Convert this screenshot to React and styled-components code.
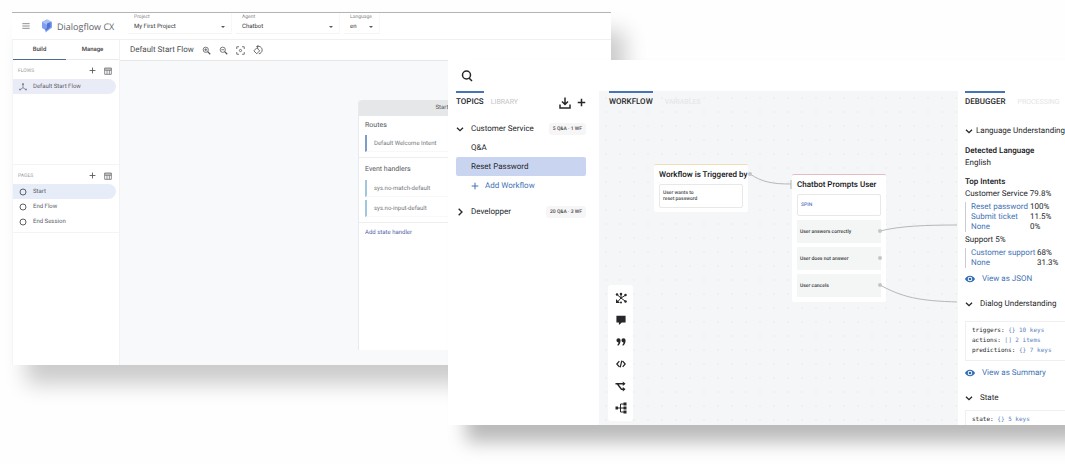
import React from 'react';
import styled, { createGlobalStyle } from 'styled-components';

const GlobalStyle = createGlobalStyle`
    * {
        box-sizing: border-box;
    }

    body {
        margin: 0;
        background: #fefefe;
        font-family: Roboto, "Liberation Sans", sans-serif;
        text-rendering: geometricPrecision;
    }

    button, select {
        border: none;
        background: none;
        padding: 0;
        margin: 0;
        font: inherit;
        color: inherit;
        text-align: left;
        text-rendering: inherit;
    }

    a {
        color: inherit;
        text-decoration: none;
    }

    ul {
        list-style: none;
        margin: 0;
        padding: 0;
    }

    h2, h3, p {
        margin: 0;
        font-size: inherit;
        font-weight: inherit;
    }

    svg {
        display: block;
        flex-shrink: 0;
    }
`;

const Stage = styled.main`
    display: grid;
    grid-template-columns: 436fr 163fr 454fr;
    grid-template-rows: 48px 305px auto;
    padding: 12px 0 39px 12px;
    min-height: 100vh;
    overflow: hidden;
`;

/* ---------- Dialogflow window ---------- */

const FlowWindow = styled.section`
    grid-column: 1 / 3;
    grid-row: 1 / 3;
    display: flex;
    flex-direction: column;
    min-width: 0;
    background: white;
    border-top: 1px solid #b4b4b4;
    box-shadow: 14px 19px 20px rgba(0, 0, 0, 0.2);
    color: #56595d;
    font-size: 6px;
`;

const FlowHeader = styled.header`
    display: flex;
    align-items: center;
    height: 27px;
    padding-left: 10px;
    border-bottom: 1px solid #f0f0f1;
`;

const Brand = styled.div`
    display: flex;
    align-items: center;
    gap: 4px;
    width: 87px;
    margin-left: 11px;
    font-family: "Open Sans", Roboto, sans-serif;
    font-size: 9px;
    white-space: nowrap;
    color: #5f6368;
`;

const Field = styled.div`
    display: flex;
    flex-direction: column;
    align-self: flex-start;
    width: ${props => props.$width}px;
    height: 21px;
    margin-right: 4px;
    padding: 1px 6px 0 6px;
    border-bottom: 1px solid #f4f4f5;
    border-right: 1px solid #f8f8f8;

    label {
        font-size: 5px;
        line-height: 6px;
        color: #85888c;
    }
`;

const SelectWrap = styled.div`
    display: flex;
    align-items: center;
    flex: 1;

    select {
        flex: 1;
        min-width: 0;
        appearance: none;
        color: #33363a;
    }
`;

const FlowBody = styled.div`
    display: grid;
    grid-template-columns: 108px 1fr;
    flex: 1;
`;

const Sidebar = styled.aside`
    display: grid;
    grid-template-rows: 20px 105px auto;
    align-content: start;
    border-left: 1px solid #f5f5f5;
    border-right: 1px solid #f1f2f3;
`;

const FlowTabs = styled.div`
    display: grid;
    grid-template-columns: 1fr 1fr;
`;

const FlowTab = styled.button`
    text-align: center;
    color: #3d4043;
    font-weight: 500;
    border-bottom: 1px solid ${props => props.$active ? '#4f6d92' : '#e9eaeb'};
`;

const ListSection = styled.section`
    padding-bottom: 3px;
    border-bottom: 1px solid #f4f4f5;
`;

const ListHead = styled.div`
    display: flex;
    align-items: center;
    gap: 8px;
    height: 19px;
    padding: 2px 7px 0 5px;
    color: #55585c;

    h2 {
        flex: 1;
        color: #96989b;
        font-size: 5px;
    }
`;

const ListItem = styled.button`
    display: flex;
    align-items: center;
    gap: 6px;
    width: 103px;
    height: 15px;
    padding-left: 6px;
    border-radius: 0 8px 8px 0;
    background: ${props => props.$active ? props.$tint : 'none'};
    color: #5c6066;
`;

const FlowMain = styled.div`
    display: flex;
    flex-direction: column;
    min-width: 0;
`;

const FlowToolbar = styled.div`
    display: flex;
    align-items: center;
    gap: 8px;
    height: 21px;
    padding-left: 10px;
    border-bottom: 1px solid #e6e7e8;
    color: #4c4f53;

    h2 {
        font-size: 8px;
        line-height: 10px;
        white-space: nowrap;
    }
`;

const FlowCanvas = styled.div`
    flex: 1;
    padding: 39px 86px 15px 238px;
    background: #f8f9fb;
`;

const StartCard = styled.article`
    height: 100%;
    background: white;
    border-left: 1px solid #e9eaec;
    border-radius: 3px 3px 0 0;

    h2 {
        height: 16px;
        line-height: 16px;
        text-align: center;
        background: #e6e7e8;
        border-radius: 3px 3px 0 0;
    }
`;

const HandlerGroup = styled.div`
    padding: 0 6px 5px 6px;
    border-bottom: 1px solid #eeeeef;

    h3 {
        height: ${props => props.$head}px;
        line-height: ${props => props.$head}px;
        font-size: 7px;
    }

    ul {
        display: grid;
        gap: 3px;
    }

    li {
        height: 17px;
        line-height: 18px;
        padding-left: 7px;
        border-left: 2px solid ${props => props.$bar};
        border-bottom: 1px solid #f8f8f8;
        color: #74777b;
    }
`;

const AddHandler = styled.button`
    height: 19px;
    padding-left: 6px;
    color: #5363a8;
`;

/* ---------- Workflow window ---------- */

const BotWindow = styled.section`
    grid-column: 2 / 4;
    grid-row: 2 / 4;
    display: flex;
    flex-direction: column;
    min-width: 0;
    background: white;
    box-shadow: 18px 17px 17px rgba(0, 0, 0, 0.27);
    color: #25272a;
    font-size: 8px;
`;

const SearchBar = styled.div`
    display: flex;
    align-items: center;
    height: 31px;
    padding-left: 13px;
`;

const BotBody = styled.div`
    display: grid;
    grid-template-columns: 151px 1fr 108px;
    flex: 1;
`;

const Tabs = styled.div`
    display: flex;
    gap: ${props => props.$gap}px;
`;

const Tab = styled.button`
    height: 19px;
    font-size: ${props => props.$active ? 8 : 7}px;
    font-weight: ${props => props.$active ? 500 : 400};
    color: ${props => props.$active ? '#25272a' : props.$faint ? '#e4e5e6' : '#c3c5c7'};
    border-top: 2px solid ${props => props.$active ? '#4675b5' : 'transparent'};
`;

const Topics = styled.aside`
    padding: 0 13px 0 8px;
`;

const TopicsHead = styled.div`
    display: flex;
    justify-content: space-between;
    margin-bottom: 9px;
`;

const TopicActions = styled.div`
    display: flex;
    align-items: center;
    gap: 6px;
    padding-top: 4px;
`;

const Topic = styled.button`
    display: flex;
    align-items: center;
    width: 100%;
    height: 19px;
    margin-top: ${props => props.$spaced ? 7 : 0}px;
    padding-left: ${props => props.$nested ? 15 : 0}px;
    border-radius: 2px;
    background: ${props => props.$active ? '#c9d5f0' : 'none'};
    color: ${props => props.$link ? '#3f73b5' : 'inherit'};

    svg {
        margin-right: ${props => props.$link ? 6 : 7}px;
    }
`;

const Count = styled.span`
    margin-left: auto;
    padding: 0 4px;
    line-height: 12px;
    border-radius: 3px;
    background: #f6f6f7;
    color: #4a4c4f;
    font-size: 5px;
    font-weight: 500;
    white-space: nowrap;
`;

const Workflow = styled.div`
    position: relative;
    padding-left: 10px;
    overflow: hidden;
    background: radial-gradient(circle, #eef0f1 1px, transparent 1px) 0 0 / 14px 14px #f5f6f7;
`;

const Wires = styled.svg`
    position: absolute;
    left: 0;
    top: 0;
    width: 360px;
    height: 334px;
    fill: none;
    stroke: #b5b7b9;
`;

const Node = styled.article`
    position: absolute;
    left: ${props => props.$x}px;
    top: ${props => props.$y}px;
    width: ${props => props.$width}px;
    padding: 0 5px ${props => props.$foot}px 5px;
    background: white;
    border-top: 1px solid ${props => props.$accent};
    border-radius: 2px;
    font-size: 5px;

    h3 {
        height: 19px;
        line-height: 19px;
        font-size: 8px;
        font-weight: 500;
        white-space: nowrap;
        color: #141517;
    }
`;

const Message = styled.p`
    display: flex;
    align-items: center;
    height: ${props => props.$height}px;
    padding-left: 3px;
    border: 1px solid #e8e8e9;
    border-radius: 2px;
    line-height: 6px;
    font-weight: 500;
    color: ${props => props.$link ? '#5b76c4' : '#4b4d50'};
`;

const Outcome = styled.button`
    display: flex;
    align-items: center;
    width: 100%;
    height: 23px;
    margin-top: 4px;
    padding-left: 3px;
    background: #f4f5f5;
    font-weight: 500;
    color: #3b3d40;
`;

const ToolStrip = styled.div`
    position: absolute;
    left: 9px;
    bottom: 4px;
    display: grid;
    width: 25px;
    padding: 2px 0;
    justify-items: center;
    background: white;
    border-radius: 3px;

    button {
        display: grid;
        place-items: center;
        width: 22px;
        height: 22px;
    }
`;

const Debugger = styled.aside`
    min-width: 0;
    padding-left: 7px;
    border-left: 1px solid #f6f6f7;
    overflow: hidden;
    white-space: nowrap;
    line-height: 12px;
`;

const Heading = styled.button`
    display: flex;
    align-items: center;
    gap: ${props => props.$gap || 7}px;
    height: 12px;
    margin: ${props => props.$top || 13}px 0 0 0;
    line-height: 12px;
`;

const Strong = styled.h3`
    margin-top: ${props => props.$top}px;
    font-weight: 500;
    color: #141517;
`;

const Intents = styled.ul`
    margin: 2px 0;
    padding-left: 5px;
    border-left: 1px solid #c9cbd6;
    line-height: 10px;

    li {
        display: grid;
        grid-template-columns: ${props => props.$labelWidth}px auto;
    }

    a {
        color: #3f73b5;
    }
`;

const ViewAs = styled.button`
    display: flex;
    align-items: center;
    gap: 7px;
    height: 12px;
    margin-top: ${props => props.$top}px;
    color: #3f73b5;
`;

const Code = styled.pre`
    margin: ${props => props.$top}px 0 0 0;
    padding: 4px 0 ${props => props.$open ? 0 : 4}px 6px;
    border: 1px solid #efeff0;
    border-right: none;
    border-bottom-width: ${props => props.$open ? 0 : 1}px;
    font-family: "DejaVu Sans Mono", "Liberation Mono", monospace;
    font-size: 6px;
    line-height: 10px;

    span {
        color: #5b7fc0;
    }
`;

/* ---------- Icons ---------- */

const Line = ({ size = 8, width = 2, box = 24, children }) => (
    <svg width={size} height={size} viewBox={`0 0 ${box} ${box}`} fill="none" stroke="currentColor" strokeWidth={width}>
        {children}
    </svg>
);

const PlusIcon = ({ size, width }) => <Line size={size} width={width}><path d="M12 2v20M2 12h20" /></Line>;

const TableIcon = () => (
    <Line size={8} width={2}><path d="M2 3h20v19H2zM2 6h20M2 10h20M9 10v12M16 10v12" /></Line>
);

const ChevronDown = () => <Line size={8} width={4}><path d="M3 8l9 9 9-9" /></Line>;

const ChevronRight = () => <Line size={8} width={4}><path d="M8 2l10 10L8 22" /></Line>;

const Caret = () => <svg width="4" height="2" viewBox="0 0 4 2"><path d="M0 0h4L2 2z" fill="#55585c" /></svg>;

const Ring = () => <Line size={8} width={3}><circle cx="12" cy="12" r="9" /></Line>;

const EyeIcon = () => (
    <svg width="10" height="8" viewBox="0 0 24 18">
        <path d="M12 1C6.500 1 2 4.500 0 9c2 4.500 6.500 8 12 8s10-3.500 12-8c-2-4.500-6.500-8-12-8z" fill="#2f6cb3" />
        <circle cx="12" cy="9" r="5.500" fill="white" />
        <circle cx="12" cy="9" r="3.200" fill="#2f6cb3" />
    </svg>
);

const LogoIcon = () => (
    <svg width="12" height="14" viewBox="0 0 24 28">
        <path d="M12 1l10 5v11L9 27v-5l-7-4V6z" fill="#7c9ff0" />
        <path d="M12 1l10 5-10 6L2 6z" fill="#a9c0f7" />
        <path d="M12 9l7-3v10L9 24v-4l3-2z" fill="#5272d2" />
    </svg>
);

const FlowIcon = () => (
    <Line size={8} width={2}>
        <path d="M12 5v9M12 14l-7 5M12 14l7 5" />
        <path d="M12 1v5M3 17v5M21 17v5" strokeWidth="4" />
    </Line>
);

const ZoomIcon = ({ plus }) => (
    <Line size={9} width={2}>
        <circle cx="10" cy="10" r="7" />
        <path d="M15 15l7 7" strokeWidth="3" />
        <path d={plus ? 'M6 10h8M10 6v8' : 'M6 10h8'} />
    </Line>
);

const CenterIcon = () => (
    <Line size={9} width={2}>
        <path d="M2 8V2h6M16 2h6v6M22 16v6h-6M8 22H2v-6" />
        <circle cx="12" cy="12" r="3" />
    </Line>
);

const RotateIcon = () => (
    <Line size={10} width={2}>
        <path d="M9 7l7 7-7 7-7-7z" />
        <path d="M9 4c8-3 13 3 13 8s-4 9-8 9M13 0L9 4l4 4" />
    </Line>
);

const SearchIcon = () => (
    <Line size={12} width={3}><circle cx="11" cy="10" r="8" /><path d="M16 16l6 6" /></Line>
);

const DownloadIcon = () => (
    <Line size={12} width={3}><path d="M12 1v14M6 9l6 6 6-6M2 15v7h20v-7" /></Line>
);

const tools = [
    {
        name: 'Hub',
        icon: (
            <Line size={12} width={2}>
                <path d="M12 12V4M12 12l8-5M12 12l8 6M12 12l-8 9M12 12L5 6" />
                <g fill="currentColor" stroke="none">
                    <circle cx="12" cy="4" r="2.500" />
                    <circle cx="21" cy="6" r="2.500" />
                    <circle cx="21" cy="19" r="2.500" />
                    <circle cx="4" cy="5" r="2.500" />
                    <path d="M2 22v-8l8 8z" />
                    <circle cx="12" cy="21" r="2" />
                </g>
            </Line>
        ),
    },
    {
        name: 'Message',
        icon: <svg width="10" height="10" viewBox="0 0 24 24"><path d="M1 2h22v16H14l-7 6v-6H1z" fill="currentColor" /></svg>,
    },
    {
        name: 'Quote',
        icon: (
            <svg width="10" height="10" viewBox="0 0 24 24" fill="currentColor">
                <path d="M1 8a5 5 0 1 1 10 0c0 6-2 10-6 13l-2-2c2-2 3-4 3-6a5 5 0 0 1-5-5zM13 8a5 5 0 1 1 10 0c0 6-2 10-6 13l-2-2c2-2 3-4 3-6a5 5 0 0 1-5-5z" />
            </svg>
        ),
    },
    {
        name: 'Code',
        icon: <Line size={10} width={3}><path d="M8 5l-6 7 6 7M16 5l6 7-6 7M14 4l-4 16" /></Line>,
    },
    {
        name: 'Split',
        icon: (
            <Line size={11} width={3}>
                <path d="M1 6h19M5 6l9 12h6" />
                <path d="M17 1l6 5-6 5zM17 13l6 5-6 5z" fill="currentColor" stroke="none" />
            </Line>
        ),
    },
    {
        name: 'Tree',
        icon: (
            <Line size={12} width={2}>
                <path d="M3 12h18M19 4h-8v16h8" />
                <path d="M1 9h5v6H1zM17 1h6v6h-6zM17 9h6v6h-6zM17 17h6v6h-6z" fill="currentColor" stroke="none" />
            </Line>
        ),
    },
];

/* ---------- Parts ---------- */

function HeaderField({ id, label, value, width }) {
    return (
        <Field $width={width}>
            <label htmlFor={id}>{label}</label>
            <SelectWrap>
                <select id={id} defaultValue={value}>
                    <option>{value}</option>
                </select>
                <Caret />
            </SelectWrap>
        </Field>
    );
}

function SidebarHead({ title }) {
    return (
        <ListHead>
            <h2>{title}</h2>
            <button aria-label="Add"><PlusIcon size={7} width={3} /></button>
            <button aria-label="Show as table"><TableIcon /></button>
        </ListHead>
    );
}

function DialogflowWindow() {
    return (
        <FlowWindow>
            <FlowHeader>
                <button aria-label="Menu"><Line size={8} width={2}><path d="M1 5h22M1 12h22M1 19h22" /></Line></button>
                <Brand><LogoIcon />Dialogflow CX</Brand>
                <HeaderField id="project" label="Project" value="My First Project" width={104} />
                <HeaderField id="agent" label="Agent" value="Chatbot" width={104} />
                <HeaderField id="language" label="Language" value="en" width={36} />
            </FlowHeader>
            <FlowBody>
                <Sidebar>
                    <FlowTabs>
                        <FlowTab $active>Build</FlowTab>
                        <FlowTab>Manage</FlowTab>
                    </FlowTabs>
                    <ListSection>
                        <SidebarHead title="FLOWS" />
                        <ListItem $active $tint="#e9ebf7"><FlowIcon />Default Start Flow</ListItem>
                    </ListSection>
                    <ListSection>
                        <SidebarHead title="PAGES" />
                        <ListItem $active $tint="#e7edf8"><Ring />Start</ListItem>
                        <ListItem><Ring />End Flow</ListItem>
                        <ListItem><Ring />End Session</ListItem>
                    </ListSection>
                </Sidebar>
                <FlowMain>
                    <FlowToolbar>
                        <h2>Default Start Flow</h2>
                        <button aria-label="Zoom in"><ZoomIcon plus /></button>
                        <button aria-label="Zoom out"><ZoomIcon /></button>
                        <button aria-label="Center"><CenterIcon /></button>
                        <button aria-label="Reset layout"><RotateIcon /></button>
                    </FlowToolbar>
                    <FlowCanvas>
                        <StartCard>
                            <h2>Start</h2>
                            <HandlerGroup $head={19} $bar="#7d9bcb">
                                <h3>Routes</h3>
                                <ul><li>Default Welcome Intent</li></ul>
                            </HandlerGroup>
                            <HandlerGroup $head={22} $bar="#9fc7de">
                                <h3>Event handlers</h3>
                                <ul>
                                    <li>sys.no-match-default</li>
                                    <li>sys.no-input-default</li>
                                </ul>
                            </HandlerGroup>
                            <AddHandler>Add state handler</AddHandler>
                        </StartCard>
                    </FlowCanvas>
                </FlowMain>
            </FlowBody>
        </FlowWindow>
    );
}

function TopicsPanel() {
    return (
        <Topics>
            <TopicsHead>
                <Tabs $gap={7}>
                    <Tab $active>TOPICS</Tab>
                    <Tab>LIBRARY</Tab>
                </Tabs>
                <TopicActions>
                    <button aria-label="Import"><DownloadIcon /></button>
                    <button aria-label="Add topic"><PlusIcon size={9} width={4} /></button>
                </TopicActions>
            </TopicsHead>
            <Topic><ChevronDown />Customer Service<Count>5 Q&amp;A · 1 WF</Count></Topic>
            <Topic $nested>Q&amp;A</Topic>
            <Topic $nested $active>Reset Password</Topic>
            <Topic $nested $link><PlusIcon size={8} width={3} />Add Workflow</Topic>
            <Topic $spaced><ChevronRight />Developper<Count>20 Q&amp;A · 3 WF</Count></Topic>
        </Topics>
    );
}

function WorkflowPanel() {
    return (
        <Workflow>
            <Tabs $gap={12}>
                <Tab $active>WORKFLOW</Tab>
                <Tab $faint>VARIABLES</Tab>
            </Tabs>
            <Node $x={55} $y={73} $width={94} $foot={4} $accent="#f0ddb4">
                <h3>Workflow is Triggered by</h3>
                <Message $height={24}>User wants to<br />reset password</Message>
            </Node>
            <Node $x={193} $y={83} $width={94} $foot={5} $accent="#e3bcc3">
                <h3>Chatbot Prompts User</h3>
                <Message $height={22} $link>SPIN</Message>
                <Outcome>User answers correctly</Outcome>
                <Outcome>User does not answer</Outcome>
                <Outcome>User cancels</Outcome>
            </Node>
            <Wires viewBox="0 0 360 334">
                <path d="M151 83c12 8 22 10 41 10M192 89v9" />
                <path d="M281 140c20-5 45-6 79-6M281 194c22 12 38 16 79 17" />
                <g fill="#c4c6c8" stroke="none">
                    <circle cx="151" cy="83" r="2" />
                    <circle cx="281" cy="140" r="2" />
                    <circle cx="281" cy="167" r="2" />
                    <circle cx="281" cy="194" r="2" />
                </g>
            </Wires>
            <ToolStrip>
                {tools.map(tool => (
                    <button key={tool.name} aria-label={tool.name}>{tool.icon}</button>
                ))}
            </ToolStrip>
        </Workflow>
    );
}

function DebuggerPanel() {
    return (
        <Debugger>
            <Tabs $gap={12}>
                <Tab $active>DEBUGGER</Tab>
                <Tab $faint>PROCESSING</Tab>
            </Tabs>
            <Heading $top={15} $gap={3}><ChevronDown />Language Understanding</Heading>
            <Strong $top={8}>Detected Language</Strong>
            <p>English</p>
            <Strong $top={7}>Top Intents</Strong>
            <p>Customer Service 79.8%</p>
            <Intents $labelWidth={59}>
                <li><a href="#reset">Reset password</a>100%</li>
                <li><a href="#ticket">Submit ticket</a>11.5%</li>
                <li><a href="#none">None</a>0%</li>
            </Intents>
            <p>Support 5%</p>
            <Intents $labelWidth={66}>
                <li><a href="#support">Customer support</a>68%</li>
                <li><a href="#none">None</a>31.3%</li>
            </Intents>
            <ViewAs $top={5}><EyeIcon />View as JSON</ViewAs>
            <Heading><ChevronDown />Dialog Understanding</Heading>
            <Code $top={11}>
                triggers: <span>{'{}'} 10 keys</span>{'\n'}
                actions: <span>[] 2 items</span>{'\n'}
                predictions: <span>{'{}'} 7 keys</span>
            </Code>
            <ViewAs $top={6}><EyeIcon />View as Summary</ViewAs>
            <Heading><ChevronDown />State</Heading>
            <Code $top={6} $open>
                state: <span>{'{}'} 5 keys</span>
            </Code>
        </Debugger>
    );
}

function App() {
    return (
        <>
            <GlobalStyle />
            <Stage>
                <DialogflowWindow />
                <BotWindow>
                    <SearchBar>
                        <button aria-label="Search"><SearchIcon /></button>
                    </SearchBar>
                    <BotBody>
                        <TopicsPanel />
                        <WorkflowPanel />
                        <DebuggerPanel />
                    </BotBody>
                </BotWindow>
            </Stage>
        </>
    );
}

export default App;
